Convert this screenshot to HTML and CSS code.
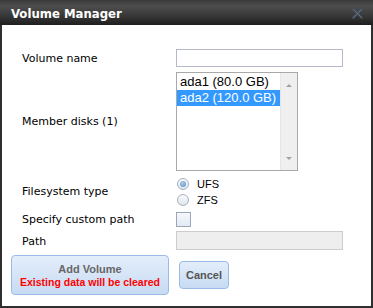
FILE: index.html
```html
<!DOCTYPE html>
<html lang="en">
<head>
    <meta charset="UTF-8">
    <title>Volume Manager</title>
    <link rel="stylesheet" href="styles.css">
</head>
<body>
    <div class="window">
        <div class="window-header">
            <span class="window-title">Volume Manager</span>
            <span class="tool-close">
                <svg width="11" height="11" viewBox="0 0 11 11">
                    <path d="M1.5 1.5 L9.5 9.5 M9.5 1.5 L1.5 9.5" stroke="#46515d" stroke-width="2.4" stroke-linecap="square"/>
                    <path d="M1.5 1.5 L9.5 9.5 M9.5 1.5 L1.5 9.5" stroke="#62748a" stroke-width="0.8"/>
                </svg>
            </span>
        </div>

        <div class="window-body">
            <div class="form-grid">
                <label class="field-label" for="volume_name">Volume name</label>
                <input type="text" id="volume_name" class="text-input">

                <div class="field-label">Member disks (1)</div>
                <div class="listbox">
                    <div class="listbox-options">
                        <div class="listbox-option">ada1 (80.0 GB)</div>
                        <div class="listbox-option selected">ada2 (120.0 GB)</div>
                    </div>
                    <div class="scrollbar">
                        <span class="arrow arrow-up"></span>
                        <span class="arrow arrow-down"></span>
                    </div>
                </div>

                <div class="field-label">Filesystem type</div>
                <div class="radio-group">
                    <label class="radio-row"><span class="radio checked"></span>UFS</label>
                    <label class="radio-row"><span class="radio"></span>ZFS</label>
                </div>

                <div class="field-label">Specify custom path</div>
                <div class="checkbox-wrap"><span class="checkbox"></span></div>

                <div class="field-label">Path</div>
                <input type="text" class="text-input disabled" disabled>
            </div>

            <div class="button-bar">
                <button class="btn btn-add">
                    <span class="btn-title">Add Volume</span>
                    <span class="btn-warning">Existing data will be cleared</span>
                </button>
                <button class="btn btn-cancel">Cancel</button>
            </div>
        </div>
    </div>
</body>
</html>
```

FILE: styles.css
```css
* {
    margin: 0;
    padding: 0;
    box-sizing: border-box;
}

body {
    font-family: 'DejaVu Sans', Verdana, sans-serif;
    font-size: 11px;
    color: #000;
    background: #fff;
}

.window {
    width: 373px;
    height: 308px;
    background-color: #2f2f2f;
    display: flex;
    flex-direction: column;
}

.window-header {
    height: 25px;
    display: flex;
    align-items: center;
    justify-content: space-between;
    padding: 0 10px 0 11px;
    background: linear-gradient(#3a3a3a 0%, #4e4e4e 25%, #333 70%, #1f1f1f 100%);
}

.window-title {
    font-family: 'DejaVu Sans Condensed', 'DejaVu Sans', sans-serif;
    font-weight: bold;
    font-size: 13px;
    color: #fff;
    padding-top: 1px;
}

.tool-close {
    display: flex;
    width: 11px;
    height: 11px;
    margin-top: 2px;
}

.window-body {
    flex: 1;
    margin: 0 2px 2px;
    background-color: #fff;
    padding: 24px 0 0 20px;
}

.form-grid {
    display: grid;
    grid-template-columns: 154px 167px;
    row-gap: 5px;
    align-items: center;
}

.field-label {
    font-size: 11px;
}

.text-input {
    height: 18px;
    border: 1px solid #b5b8c8;
    background: #fff;
    font-size: 11px;
}

.text-input.disabled {
    height: 19px;
    margin-top: -1px;
    background-color: #eee;
    border-color: #ccc;
}

.listbox {
    width: 122px;
    height: 99px;
    border: 1px solid #a9a9a9;
    display: flex;
    font-family: 'Liberation Sans', Arial, sans-serif;
    font-size: 13px;
}

.listbox-options {
    flex: 1;
    padding-top: 1px;
}

.listbox-option {
    height: 16px;
    line-height: 16px;
    padding-left: 3px;
}

.listbox-option.selected {
    background-color: #3399ff;
    color: #fff;
}

.scrollbar {
    width: 17px;
    background-color: #efefef;
    border-left: 1px solid #e6e6e6;
    display: flex;
    flex-direction: column;
    justify-content: space-between;
    align-items: center;
    padding: 11px 0 10px;
}

.arrow {
    width: 0;
    height: 0;
    border-left: 3px solid transparent;
    border-right: 3px solid transparent;
}

.arrow-up {
    border-bottom: 3px solid #a3a3a3;
}

.arrow-down {
    border-top: 3px solid #a3a3a3;
}

.radio-group {
    display: flex;
    flex-direction: column;
    gap: 1px;
}

.radio-row {
    height: 15px;
    display: flex;
    align-items: center;
    gap: 8px;
    padding-left: 1px;
    font-family: 'Liberation Sans', Arial, sans-serif;
    font-size: 11px;
}

.radio {
    width: 12px;
    height: 12px;
    border-radius: 50%;
    border: 1px solid #a7b0bb;
    background: linear-gradient(#fafcfe, #dfe6ee);
    display: flex;
    align-items: center;
    justify-content: center;
}

.radio.checked::after {
    content: '';
    width: 6px;
    height: 6px;
    border-radius: 50%;
    background: radial-gradient(circle at 40% 35%, #a9cbe8, #5b8fc2);
}

.checkbox-wrap {
    height: 15px;
    display: flex;
}

.checkbox {
    width: 15px;
    height: 15px;
    border: 1px solid #9aa7b8;
    background: linear-gradient(#f6f9fc, #e1e9f3);
}

.button-bar {
    display: flex;
    align-items: center;
    gap: 10px;
    margin: 5px 0 0 -11px;
}

.btn {
    font-family: 'Liberation Sans', Arial, sans-serif;
    font-weight: bold;
    font-size: 11px;
    white-space: nowrap;
    border: 1px solid #99bbe8;
    border-radius: 4px;
    background: linear-gradient(#e4eefa, #c7dbf3);
    color: #666;
    display: flex;
    flex-direction: column;
    align-items: center;
    justify-content: center;
}

.btn-add {
    width: 158px;
    height: 40px;
    gap: 1px;
}

.btn-warning {
    color: #f00;
    font-size: 10.5px;
}

.btn-cancel {
    width: 50px;
    height: 28px;
    color: #555;
}
```
